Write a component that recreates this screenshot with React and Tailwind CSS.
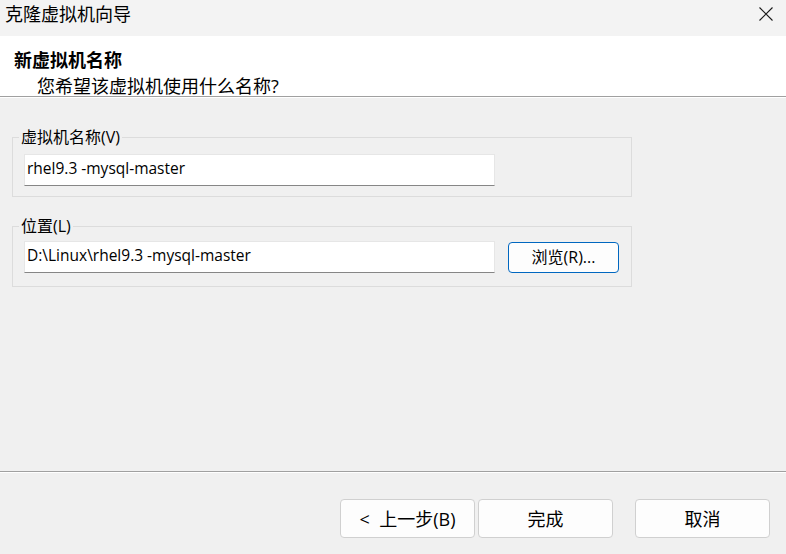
import React from "react";

const CJK = "font-['Open_Sans','Noto_Sans_CJK_SC',sans-serif]";

function FooterButton({ children, className = "" }) {
  return (
    <button
      className={`w-[135px] h-[39px] rounded-[4px] border border-[#d0d0d0] bg-[#fdfdfd] text-[18px] leading-[24px] text-black flex items-center justify-center ${className}`}
    >
      {children}
    </button>
  );
}

function TextBox({ value }) {
  return (
    <div className="w-[471px] h-[32px] bg-white border border-[#e6e6e6] border-b-[#868686] flex items-center pl-[2px] pb-[5px] text-[15.5px] leading-[20px] text-black">
      {value}
    </div>
  );
}

export default function App() {
  return (
    <div className={`w-[786px] h-[554px] flex flex-col bg-[#f0f0f0] overflow-hidden ${CJK}`}>
      {/* Title bar */}
      <div className="h-[36px] bg-[#f3f3f3] flex items-start justify-between pl-[5px] pt-[2px]">
        <span className="text-[18px] leading-[24px] text-black">克隆虚拟机向导</span>
        <div className="pr-[13px] pt-[5px]">
          <svg width="14" height="14" viewBox="0 0 14 14" className="block">
            <path d="M0.5 0.5 L13.5 13.5 M13.5 0.5 L0.5 13.5" stroke="#1a1a1a" strokeWidth="1.1" fill="none" />
          </svg>
        </div>
      </div>

      {/* Header */}
      <div className="h-[61px] bg-white border-b border-[#a0a0a0] pl-[14px] pt-[12px]">
        <div className="text-[18px] leading-[24px] font-bold text-black">新虚拟机名称</div>
        <div className="text-[18px] leading-[24px] text-black ml-[23px] mt-[2px]">您希望该虚拟机使用什么名称?</div>
      </div>
      <div className="h-px bg-white" />

      {/* Body */}
      <div className="flex-1 pl-[12px] pt-[29px] flex flex-col gap-[19px]">
        <fieldset className="w-[620px] border border-[#dcdcdc] px-[11px] pb-[10px]">
          <legend className="ml-[-5px] px-[2px] text-[16px] leading-[20px] text-black">虚拟机名称(V)</legend>
          <div className="mt-[7px]">
            <TextBox value="rhel9.3 -mysql-master" />
          </div>
        </fieldset>

        <fieldset className="w-[620px] border border-[#dcdcdc] px-[11px] pb-[13px]">
          <legend className="ml-[-5px] px-[2px] text-[16px] leading-[20px] text-black">位置(L)</legend>
          <div className="mt-[5px] flex items-center gap-[13px]">
            <TextBox value="D:\Linux\rhel9.3 -mysql-master" />
            <button className="w-[111px] h-[31px] rounded-[4px] border border-[#0067c0] bg-[#fdfdfd] text-[16px] leading-[20px] text-black flex items-center justify-center">
              浏览(R)...
            </button>
          </div>
        </fieldset>
      </div>

      {/* Footer */}
      <div className="h-[83px] border-t border-[#a0a0a0] flex flex-col">
        <div className="h-px bg-white" />
        <div className="flex justify-end pt-[26px] pr-[16px]">
          <FooterButton>&lt;&nbsp; 上一步(B)</FooterButton>
          <FooterButton className="ml-[3px]">完成</FooterButton>
          <FooterButton className="ml-[22px]">取消</FooterButton>
        </div>
      </div>
    </div>
  );
}
